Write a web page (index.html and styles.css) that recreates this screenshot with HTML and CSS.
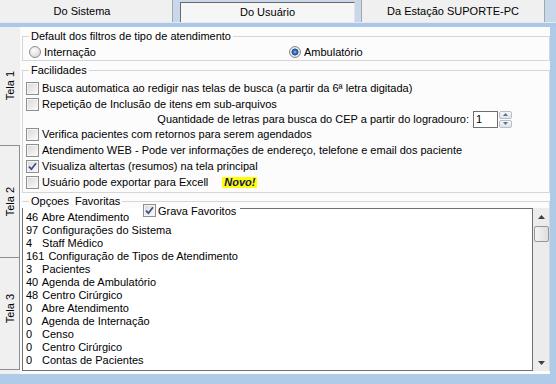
FILE: index.html
```html
<!DOCTYPE html>
<html lang="pt">
<head>
<meta charset="utf-8">
<title>Configurações</title>
<link rel="stylesheet" href="styles.css">
</head>
<body>
<div class="window">
  <div class="toptabs">
    <div class="ttab t1">Do Sistema</div>
    <div class="ttab sel">Do Usuário</div>
    <div class="ttab t3">Da Estação SUPORTE-PC</div>
  </div>
  <div class="topband"></div>
  <div class="main">
    <div class="vtabs">
      <div class="vtab v1"><span>Tela 1</span></div>
      <div class="vtab v2"><span>Tela 2</span></div>
      <div class="vtab v3"><span>Tela 3</span></div>
    </div>
    <div class="panel">
      <fieldset class="grp g1">
        <legend>Default dos filtros de tipo de atendimento</legend>
        <div class="radios">
          <label class="radio first"><span class="rd"></span>Internação</label>
          <label class="radio"><span class="rd on"></span>Ambulatório</label>
        </div>
      </fieldset>
      <fieldset class="grp g2">
        <legend>Facilidades</legend>
        <div class="row"><span class="cb"></span>Busca automatica ao redigir nas telas de busca (a partir da 6ª letra digitada)</div>
        <div class="row"><span class="cb"></span>Repetição de Inclusão de itens em sub-arquivos</div>
        <div class="row qty">
          <span>Quantidade de letras para busca do CEP a partir do logradouro:</span>
          <span class="num">1</span>
          <span class="spin">
            <span class="sb"><svg width="5" height="3" viewBox="0 0 5 3"><polygon points="0,3 2.5,0 5,3" fill="#5a6f93"/></svg></span>
            <span class="sb"><svg width="5" height="3" viewBox="0 0 5 3"><polygon points="0,0 2.5,3 5,0" fill="#5a6f93"/></svg></span>
          </span>
        </div>
        <div class="row"><span class="cb"></span>Verifica pacientes com retornos para serem agendados</div>
        <div class="row"><span class="cb"></span>Atendimento WEB - Pode ver informações de endereço, telefone e email dos paciente</div>
        <div class="row"><span class="cb"><svg width="9" height="9" viewBox="0 0 9 9"><path d="M1 4.6 L3.4 7.2 L8 1.2" fill="none" stroke="#3a4f8c" stroke-width="1.7"/></svg></span>Visualiza altertas (resumos) na tela principal</div>
        <div class="row"><span class="cb"></span>Usuário pode exportar para Excell<span class="novo">Novo!</span></div>
      </fieldset>
      <fieldset class="grp g3">
        <legend>Opçoes&nbsp; Favoritas</legend>
        <div class="listwrap">
          <div class="grava"><span class="cb"><svg width="9" height="9" viewBox="0 0 9 9"><path d="M1 4.6 L3.4 7.2 L8 1.2" fill="none" stroke="#3a4f8c" stroke-width="1.7"/></svg></span>Grava Favoritos</div>
          <div class="list">
            <div class="item"><span class="n">46</span> Abre Atendimento</div>
            <div class="item"><span class="n">97</span> Configurações do Sistema</div>
            <div class="item"><span class="n">4</span> Staff Médico</div>
            <div class="item"><span class="n">161</span> Configuração de Tipos de Atendimento</div>
            <div class="item"><span class="n">3</span> Pacientes</div>
            <div class="item"><span class="n">40</span> Agenda de Ambulatório</div>
            <div class="item"><span class="n">48</span> Centro Cirúrgico</div>
            <div class="item"><span class="n">0</span> Abre Atendimento</div>
            <div class="item"><span class="n">0</span> Agenda de Internação</div>
            <div class="item"><span class="n">0</span> Censo</div>
            <div class="item"><span class="n">0</span> Centro Cirúrgico</div>
            <div class="item"><span class="n">0</span> Contas de Pacientes</div>
          </div>
          <div class="scroll">
            <div class="arrow"><svg width="7" height="4" viewBox="0 0 7 4"><polygon points="0,4 3.5,0 7,4" fill="#404040"/></svg></div>
            <div class="thumb"></div>
            <div class="track"></div>
            <div class="arrow"><svg width="7" height="4" viewBox="0 0 7 4"><polygon points="0,0 3.5,4 7,0" fill="#404040"/></svg></div>
          </div>
        </div>
      </fieldset>
    </div>
  </div>
  <div class="bottomband"></div>
</div>
</body>
</html>
```

FILE: styles.css
```css
* { box-sizing: border-box; }
html, body { margin: 0; padding: 0; }
body {
  width: 556px;
  height: 384px;
  overflow: hidden;
  font-family: "Liberation Sans", Arial, sans-serif;
  font-size: 11px;
  color: #000;
  background: #b0cbe9;
}
.window { display: flex; flex-direction: column; height: 384px; }

/* top tabs */
.toptabs { display: flex; height: 22px; background: #c8d8ea; flex-shrink: 0; }
.ttab {
  display: flex; align-items: center; justify-content: center;
  background: #f0f0f0; white-space: nowrap;
}
.ttab.t1 { width: 173px; border-right: 1px solid #a4a8ad; padding-right: 8px; }
.ttab.sel {
  width: 175px; margin-left: 7px; margin-top: 2px; padding-bottom: 2px;
  background: #f6f6f6;
  border-top: 1px solid #6a6a6a; border-left: 1px solid #6a6a6a; border-right: 1px solid #e4e4e4;
}
.ttab.t3 { width: 184px; margin-left: 6px; border-left: 1px solid #a4a8ad; border-right: 1px solid #a4a8ad; }
.topband { height: 5px; background: #abc8e9; border-top: 1px solid #e2ebf5; flex-shrink: 0; }

/* main */
.main { display: flex; height: 347px; flex-shrink: 0; }
.vtabs { width: 20px; display: flex; flex-direction: column; background: #f0f0f0; }
.vtab {
  display: flex; align-items: center; justify-content: center;
  background: #f0f0f0; border-right: 1px solid #8a8e96;
}
.vtab span { writing-mode: vertical-rl; transform: rotate(180deg); white-space: nowrap; }
.vtab.v1 { height: 118px; border-right-color: #f0f0f0; }
.vtab.v2 { height: 112px; border-top: 1px solid #8a8e96; }
.vtab.v3 { height: 113px; border-top: 1px solid #8a8e96; border-bottom: 1px solid #8a8e96; padding-bottom: 10px; }

.panel {
  width: 530px;
  background: #fcfcfc;
  padding: 3px 0 0 2px;
  display: flex; flex-direction: column;
}

/* group boxes */
.grp {
  margin: 0; padding: 0; min-width: 0;
  width: 528px;
  border: 1px solid #d4d6d8;
}
.grp legend { padding: 0 2px; margin-left: 6px; line-height: 12px; }
.g1 { padding: 3px 0 1px 0; }
.g2 { margin-top: 3px; padding: 4px 0 2px 0; }
.g3 { margin-top: 2px; padding: 1px 0 0 0; border-left: none; border-bottom: none; }
.g3 legend { margin-left: 7px; }

.radios { display: flex; height: 14px; align-items: center; padding-left: 6px; }
.radio { display: flex; align-items: center; }
.radio.first { width: 260px; }
.rd {
  width: 12px; height: 12px; border-radius: 50%;
  border: 1px solid #8d8d8d; margin-right: 3px;
  background: radial-gradient(circle at 40% 35%, #fdfdfd, #d0d0d0);
}
.rd.on {
  background: radial-gradient(circle at 50% 50%, #9cc8f0 0, #3c78c0 1.5px, #1d4a8f 3.2px, #efefef 3.8px, #d0d0d0 6px);
}

.row { display: flex; align-items: center; height: 16px; padding-left: 3px; white-space: nowrap; }
.row.qty { height: 14px; justify-content: flex-end; padding-right: 37px; }
.cb {
  width: 13px; height: 13px; flex-shrink: 0;
  border: 1px solid #8e8f8f; margin-right: 3px;
  background: linear-gradient(135deg, #d8d8d8, #fbfbfb);
  box-shadow: inset 0 0 0 1px #f4f4f4;
  display: flex; align-items: center; justify-content: center;
}
.num {
  width: 25px; height: 17px; margin-left: 4px;
  border: 1px solid #6f6f6f; background: #fff;
  padding-left: 2px; line-height: 15px; flex-shrink: 0;
}
.spin { display: flex; flex-direction: column; width: 13px; height: 17px; margin-left: 1px; gap: 1px; }
.sb {
  flex: 1; display: flex; align-items: center; justify-content: center;
  border: 1px solid #b9bec6; border-radius: 2px;
  background: linear-gradient(#f6f8fa, #dde3ea);
}
.novo {
  margin-left: 14px; padding: 0 2px; height: 11px; line-height: 11px;
  background: #ffff00; color: #14145a;
  font-weight: bold; font-style: italic; font-size: 11px;
}

/* list */
.listwrap { position: relative; display: flex; height: 163px; }
.grava {
  position: absolute; left: 1px; top: -4px; width: 217px; height: 13px;
  display: flex; align-items: center; padding-left: 120px;
  background: linear-gradient(transparent 0 4px, #fff 4px 7px, transparent 7px);
  white-space: nowrap;
}
.grava .cb { margin-right: 2px; }
.list {
  width: 511px; border: 1px solid #6f6f6f; background: #fff;
  padding: 2px 0 0 3px;
}
.item { line-height: 13px; white-space: nowrap; }
.item .n { display: inline-block; min-width: 12px; margin-right: 1px; }
.scroll { width: 16px; background: #ececec; display: flex; flex-direction: column; }
.arrow { height: 17px; display: flex; align-items: center; justify-content: center; }
.thumb {
  height: 16px; margin: 1px 0 0 1px;
  border: 1px solid #979797; border-radius: 2px;
  background: linear-gradient(90deg, #f4f4f4, #dedede);
}
.track { flex: 1; }
.bottomband { flex: 1; background: #b0cbe9; }
```
